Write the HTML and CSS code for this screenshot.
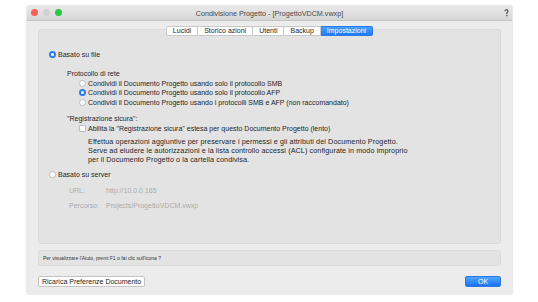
FILE: index.html
```html
<!DOCTYPE html>
<html lang="it">
<head>
    <meta charset="UTF-8">
    <title>Condivisione Progetto</title>
    <link rel="stylesheet" href="styles.css">
</head>
<body>
    <div class="window">
        <div class="titlebar">
            <div class="lights">
                <span class="light red"></span>
                <span class="light grey"></span>
                <span class="light green"></span>
            </div>
            <div class="title">Condivisione Progetto - [ProgettoVDCM.vwxp]</div>
            <div class="help-icon">
                <svg width="5" height="8" viewBox="0 0 5 8">
                    <path d="M1 2.2C1 1.2 1.7 .7 2.5 .7S4 1.2 4 2.1C4 3.1 2.8 3.2 2.8 4.4V5" fill="none" stroke="#555" stroke-width="1.2"/>
                    <rect x="2.1" y="5.8" width="1.4" height="1.4" fill="#555"/>
                </svg>
            </div>
        </div>

        <div class="content">
            <ul class="tabs">
                <li>Lucidi</li>
                <li>Storico azioni</li>
                <li>Utenti</li>
                <li>Backup</li>
                <li class="active">Impostazioni</li>
            </ul>

            <div class="panel">
                <div class="option">
                    <span class="radio checked"></span>
                    <span>Basato su file</span>
                </div>

                <div class="group">
                    <h3>Protocollo di rete</h3>
                    <div class="choices">
                        <div class="option">
                            <span class="radio"></span>
                            <span>Condividi il Documento Progetto usando solo il protocollo SMB</span>
                        </div>
                        <div class="option">
                            <span class="radio checked"></span>
                            <span>Condividi il Documento Progetto usando solo il protocollo AFP</span>
                        </div>
                        <div class="option">
                            <span class="radio"></span>
                            <span>Condividi il Documento Progetto usando i protocolli SMB e AFP (non raccomandato)</span>
                        </div>
                    </div>

                    <h3 class="secure">"Registrazione sicura":</h3>
                    <div class="choices">
                        <div class="option">
                            <span class="checkbox"></span>
                            <span>Abilita la "Registrazione sicura" estesa per questo Documento Progetto (lento)</span>
                        </div>
                        <p class="note">
                            Effettua operazioni aggiuntive per preservare i permessi e gli attributi del Documento Progetto.<br>
                            Serve ad eludere le autorizzazioni e la lista controllo accessi (ACL) configurate in modo improprio<br>
                            per il Documento Progetto o la cartella condivisa.
                        </p>
                    </div>
                </div>

                <div class="option server">
                    <span class="radio"></span>
                    <span>Basato su server</span>
                </div>

                <dl class="server-info">
                    <dt>URL:</dt>
                    <dd>http://10.0.0.165</dd>
                    <dt>Percorso:</dt>
                    <dd>Projects/ProgettoVDCM.vwxp</dd>
                </dl>
            </div>

            <div class="help-bar">Per visualizzare l'Aiuto, premi F1 o fai clic sull'icona ?</div>

            <div class="actions">
                <button class="btn">Ricarica Preferenze Documento</button>
                <button class="btn btn-ok">OK</button>
            </div>
        </div>
    </div>
</body>
</html>
```

FILE: styles.css
```css
* {
    margin: 0;
    padding: 0;
    box-sizing: border-box;
    font-family: 'Liberation Sans', Arial, sans-serif;
}

body {
    background: #fff;
    padding: 6px 0 0 27px;
}

.window {
    width: 485px;
    height: 289px;
    background: #ececec;
    box-shadow: 0 0 2px rgba(0,0,0,0.25);
    color: #262626;
}

.titlebar {
    position: relative;
    height: 15px;
    background: linear-gradient(#e9e9e9, #d6d6d6);
    border-bottom: 1px solid #c4c4c4;
    display: flex;
    align-items: center;
    justify-content: center;
}

.lights {
    position: absolute;
    left: 4px;
    top: 3px;
    display: flex;
    gap: 5px;
}

.light {
    width: 7px;
    height: 7px;
    border-radius: 50%;
}

.red { background: #fc5f57; }
.grey { background: #d1d1d1; }
.green { background: #29c940; }

.title {
    font-size: 7.2px;
    color: #4a4a4a;
}

.help-icon {
    position: absolute;
    right: 3px;
    top: 3px;
}

.help-icon svg {
    display: block;
}

.content {
    padding: 5px 11px 0;
}

.tabs {
    position: relative;
    z-index: 1;
    list-style: none;
    display: flex;
    justify-content: center;
    height: 10px;
}

.tabs li {
    background: #fff;
    border: 1px solid #c8c8c8;
    border-left: none;
    font-size: 7px;
    line-height: 8px;
    padding: 0 6px;
}

.tabs li:first-child {
    border-left: 1px solid #c8c8c8;
    border-radius: 2px 0 0 2px;
}

.tabs li.active {
    background: linear-gradient(#4aa0fb, #1e78f4);
    border-color: #2a7ae8;
    color: #fff;
    border-radius: 0 2px 2px 0;
}

.panel {
    margin-top: -7px;
    height: 215px;
    background: #e3e3e3;
    border: 1px solid #dadada;
    border-radius: 3px;
    padding: 20px 0 0 10px;
    font-size: 7px;
}

.option {
    display: flex;
    align-items: center;
    gap: 2px;
    height: 9.5px;
    white-space: nowrap;
}

.radio {
    flex-shrink: 0;
    width: 7px;
    height: 7px;
    border-radius: 50%;
    background: #fff;
    border: 1px solid #bdbdbd;
}

.radio.checked {
    border: 2px solid #2c7cf6;
}

.checkbox {
    flex-shrink: 0;
    width: 7px;
    height: 7px;
    border-radius: 1px;
    background: #fff;
    border: 1px solid #bdbdbd;
}

.group {
    padding: 9px 0 0 18px;
}

.group h3 {
    font-size: 7px;
    font-weight: normal;
    line-height: 9px;
}

.group h3.secure {
    margin-top: 7px;
}

.choices {
    padding-left: 12px;
    margin-top: 1px;
}

.note {
    padding: 3px 0 0 9px;
    line-height: 9px;
    font-size: 7.2px;
    letter-spacing: 0.1px;
}

.server {
    margin-top: 6px;
}

.server-info {
    display: grid;
    grid-template-columns: 37px auto;
    row-gap: 6px;
    padding: 7px 0 0 20px;
    color: #ababab;
    line-height: 9px;
}

.help-bar {
    margin-top: 6px;
    height: 16px;
    background: #e3e3e3;
    border: 1px solid #dadada;
    border-radius: 3px;
    font-size: 5px;
    line-height: 14px;
    padding-left: 4px;
    color: #333;
}

.actions {
    display: flex;
    justify-content: space-between;
    margin-top: 10px;
}

.btn {
    height: 11px;
    padding: 0 3px;
    background: #fff;
    border: 1px solid #c4c4c4;
    border-radius: 2px;
    font-size: 7px;
    color: #262626;
}

.btn-ok {
    width: 36px;
    background: linear-gradient(#53a6fc, #1b72f2);
    border-color: #2a78e6;
    color: #fff;
}
```
